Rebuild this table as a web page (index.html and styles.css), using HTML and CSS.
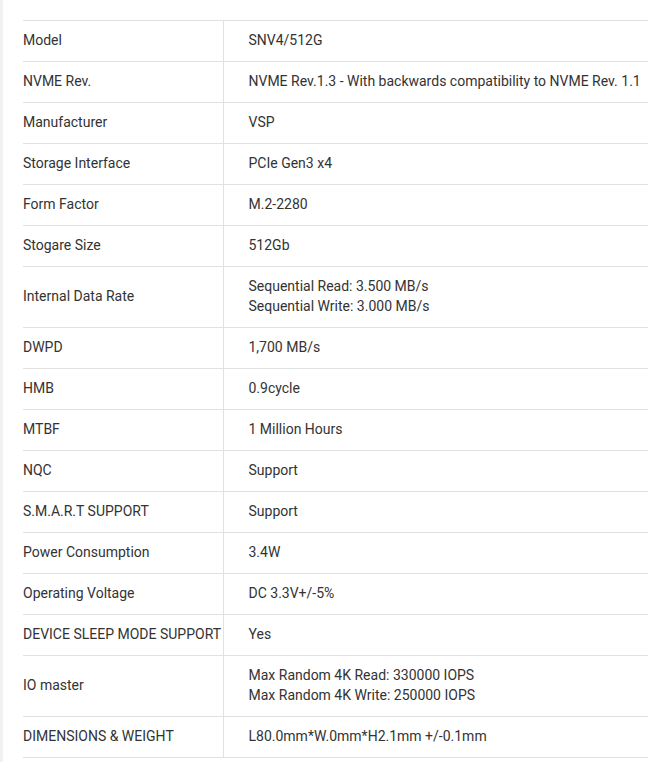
FILE: index.html
```html
<!DOCTYPE html>
<html>
<head>
<meta charset="utf-8">
<link rel="stylesheet" href="styles.css">
</head>
<body>
<div class="page">
  <div class="strip"></div>
  <div class="content">
    <table class="specs">
      <tbody>
        <tr><td class="k">Model</td><td class="v">SNV4/512G</td></tr>
        <tr><td class="k">NVME Rev.</td><td class="v">NVME Rev.1.3 - With backwards compatibility to NVME Rev. 1.1</td></tr>
        <tr><td class="k">Manufacturer</td><td class="v">VSP</td></tr>
        <tr><td class="k">Storage Interface</td><td class="v">PCIe Gen3 x4</td></tr>
        <tr><td class="k">Form Factor</td><td class="v">M.2-2280</td></tr>
        <tr><td class="k">Stogare Size</td><td class="v">512Gb</td></tr>
        <tr><td class="k">Internal Data Rate</td><td class="v">Sequential Read: 3.500 MB/s<br>Sequential Write: 3.000 MB/s</td></tr>
        <tr><td class="k">DWPD</td><td class="v">1,700 MB/s</td></tr>
        <tr><td class="k">HMB</td><td class="v">0.9cycle</td></tr>
        <tr><td class="k">MTBF</td><td class="v">1 Million Hours</td></tr>
        <tr><td class="k">NQC</td><td class="v">Support</td></tr>
        <tr><td class="k">S.M.A.R.T SUPPORT</td><td class="v">Support</td></tr>
        <tr><td class="k">Power Consumption</td><td class="v">3.4W</td></tr>
        <tr><td class="k">Operating Voltage</td><td class="v">DC 3.3V+/-5%</td></tr>
        <tr><td class="k">DEVICE SLEEP MODE SUPPORT</td><td class="v">Yes</td></tr>
        <tr><td class="k">IO master</td><td class="v">Max Random 4K Read: 330000 IOPS<br>Max Random 4K Write: 250000 IOPS</td></tr>
        <tr><td class="k">DIMENSIONS &amp; WEIGHT</td><td class="v">L80.0mm*W.0mm*H2.1mm +/-0.1mm</td></tr>
      </tbody>
    </table>
  </div>
</div>
</body>
</html>
```
FILE: styles.css
```css
html, body {
  margin: 0;
  padding: 0;
  background: #ffffff;
}
body {
  font-family: Roboto, "Liberation Sans", Arial, sans-serif;
  font-size: 14px;
  color: #333333;
  overflow: hidden;
}
.page {
  display: flex;
  min-height: 762px;
}
.strip {
  width: 3px;
  flex: 0 0 3px;
  background: #f1f1f4;
}
.content {
  flex: 1;
  padding: 20px 0 0 20px;
  min-width: 0;
}
.specs {
  border-collapse: collapse;
  width: 100%;
  border-top: 1px solid #e1e1e1;
}
.specs td {
  border-bottom: 1px solid #e1e1e1;
  padding: 9px 0 11px;
  line-height: 20px;
  vertical-align: middle;
  white-space: nowrap;
}
.specs td.k {
  width: 200px;
  box-sizing: border-box;
  padding-left: 0;
  border-right: 1px solid #e1e1e1;
}
.specs td.v {
  padding-left: 25px;
}
```
